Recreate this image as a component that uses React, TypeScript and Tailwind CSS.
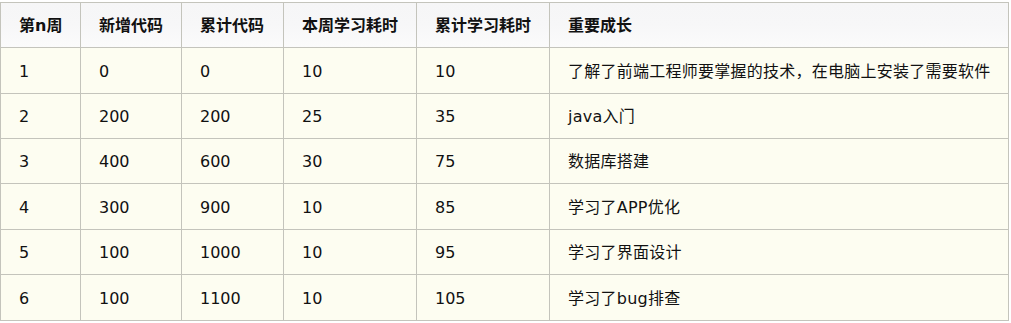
const HEAD = ["第n周", "新增代码", "累计代码", "本周学习耗时", "累计学习耗时", "重要成长"] as const;

const ROWS = [
  ["1", "0", "0", "10", "10", "了解了前端工程师要掌握的技术，在电脑上安装了需要软件"],
  ["2", "200", "200", "25", "35", "java入门"],
  ["3", "400", "600", "30", "75", "数据库搭建"],
  ["4", "300", "900", "10", "85", "学习了APP优化"],
  ["5", "100", "1000", "10", "95", "学习了界面设计"],
  ["6", "100", "1100", "10", "105", "学习了bug排查"],
] as const;

// row pitch in the shot wobbles between 45 and 46px
const ROW_H = ["h-[46px]", "h-[45px]", "h-[45px]", "h-[46px]", "h-[45px]", "h-[46px]"] as const;

export default function App() {
  return (
    <div className="bg-white pt-[2px]" style={{ width: 1011, height: 323 }}>
      <div
        className="grid w-[1009px] grid-cols-[80px_101px_102px_133px_133px_459px] border-l border-t border-[#c4c4bc] text-[16px] text-[#111]"
        style={{ fontFamily: '"DejaVu Sans", "Noto Sans CJK SC", sans-serif' }}
      >
        {HEAD.map((h) => (
          <div
            key={h}
            className="flex h-[45px] items-center border-b border-r border-[#c4c4bc] bg-gradient-to-b from-[#f6f6f7] via-[#f7f7f8] to-[#fbfbfb] pl-[18px] pt-[2px] font-bold"
          >
            {h}
          </div>
        ))}
        {ROWS.map((row, r) =>
          row.map((cell, c) => (
            <div
              key={`${r}-${c}`}
              className={`flex ${ROW_H[r]} items-center border-b border-r border-[#c4c4bc] bg-[#fdfdf1] pl-[18px] pt-[2px] ${
                c === 5 ? "tracking-[0.25px]" : ""
              }`}
            >
              {cell}
            </div>
          )),
        )}
      </div>
    </div>
  );
}
